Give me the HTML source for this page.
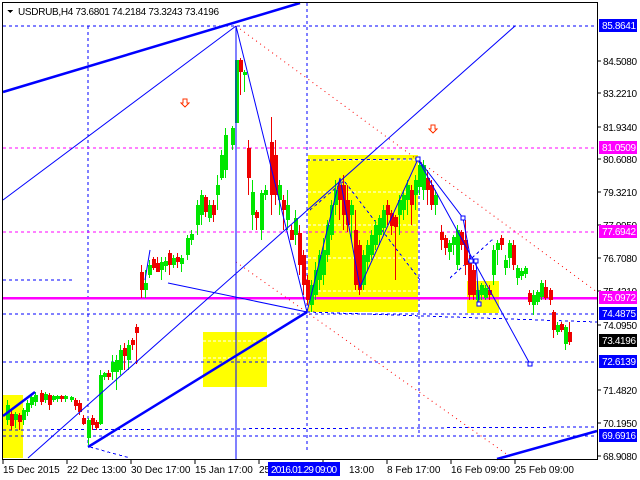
<!DOCTYPE html>
<html><head><meta charset="utf-8"><style>
html,body{margin:0;padding:0;background:#fff;width:640px;height:480px;overflow:hidden}
svg{display:block;font-family:"Liberation Sans",sans-serif;font-size:10px}
</style></head><body>
<svg width="640" height="480" viewBox="0 0 640 480" shape-rendering="crispEdges">
<rect x="0" y="0" width="640" height="480" fill="#fff"/>
<rect x="308" y="155" width="110" height="157" fill="#ffff00"/>
<rect x="203" y="332" width="64" height="55" fill="#ffff00"/>
<rect x="3" y="395" width="20" height="63" fill="#ffff00"/>
<rect x="467" y="281" width="32" height="32" fill="#ffff00"/>
<g stroke="#fff" stroke-dasharray="3,2" stroke-width="1">
<line x1="308" y1="160" x2="418" y2="160"/><line x1="308" y1="192" x2="418" y2="192"/><line x1="308" y1="225" x2="418" y2="225"/><line x1="308" y1="258" x2="418" y2="258"/><line x1="308" y1="291" x2="418" y2="291"/>
<line x1="203" y1="341" x2="267" y2="341"/><line x1="203" y1="358" x2="267" y2="358"/>
</g>
<g stroke="#0000ff" stroke-dasharray="3,3" stroke-width="1" fill="none">
<line x1="3" y1="26" x2="597" y2="26"/>
<line x1="3" y1="314" x2="597" y2="314"/>
<line x1="3" y1="362" x2="597" y2="362"/>
<line x1="3" y1="430" x2="597" y2="427"/>
<line x1="3" y1="436" x2="597" y2="436"/>
<line x1="3" y1="280" x2="72" y2="280"/>
<line x1="88" y1="26" x2="88" y2="446"/>
<line x1="307" y1="3" x2="307" y2="452"/>
<line x1="419" y1="160" x2="419" y2="436"/>
<line x1="307" y1="312" x2="597" y2="322"/>
<line x1="307" y1="160" x2="418" y2="159"/>
<line x1="345" y1="182" x2="420" y2="280"/>
<line x1="310" y1="210" x2="345" y2="180"/>
<line x1="450" y1="278" x2="494" y2="238"/>
<line x1="90" y1="447" x2="130" y2="458"/>
</g>
<g stroke="#ff00ff" stroke-dasharray="3,3" fill="none">
<line x1="3" y1="148" x2="597" y2="148"/>
<line x1="3" y1="232" x2="597" y2="232"/>
</g>
<line x1="3" y1="298" x2="597" y2="298" stroke="#ff00ff" stroke-width="2.5"/>
<g stroke="#ff0000" stroke-dasharray="1,4" fill="none" shape-rendering="auto">
<line x1="236" y1="26" x2="597" y2="292"/>
<line x1="236" y1="262" x2="512" y2="458"/>
</g>
<g id="c" shape-rendering="crispEdges"></g>
<g stroke="#0000ff" stroke-width="1" fill="none" shape-rendering="auto">
<line x1="3" y1="200" x2="236" y2="26"/>
<line x1="28" y1="458" x2="515" y2="26"/>
<polyline points="236,26 307,312 340,178 360,287 418,159 463,218 471,261 476,261 479,304"/>
<line x1="418" y1="159" x2="530" y2="364"/>
<line x1="145" y1="280" x2="150" y2="250"/>
<line x1="168" y1="283" x2="307" y2="312"/>
</g>
<line x1="236" y1="26" x2="236" y2="459" stroke="#0000ff" stroke-width="1"/>
<g stroke="#0000ff" stroke-width="2.5" fill="none" shape-rendering="auto">
<line x1="3" y1="92" x2="300" y2="3"/>
<line x1="88" y1="447" x2="307" y2="312"/>
<line x1="3" y1="416" x2="35" y2="392"/>
<line x1="497" y1="459" x2="597" y2="431"/>
</g>
<g fill="#fff" stroke="#0000ff">
<rect x="416" y="157" width="4" height="4"/><rect x="461" y="216" width="4" height="4"/><rect x="469" y="259" width="4" height="4"/><rect x="474" y="259" width="4" height="4"/><rect x="477" y="302" width="4" height="4"/><rect x="528" y="362" width="4" height="4"/>
</g>
<g fill="#fff" stroke="#ff3300">
<path d="M183 99h4v4h2l-4 4-4-4h2z"/>
<path d="M431 125h4v4h2l-4 4-4-4h2z"/>
</g>
<line x1="2.5" y1="2" x2="2.5" y2="459" stroke="#000"/>
<line x1="2" y1="2.5" x2="597" y2="2.5" stroke="#000"/>
<line x1="597.5" y1="2" x2="597.5" y2="459" stroke="#000"/>
<line x1="2" y1="459.5" x2="598" y2="459.5" stroke="#000"/>
<path d="M7 10h6l-3 3z" fill="#000"/>
<text x="18" y="15" fill="#000" textLength="201">USDRUB,H4  73.6801 74.2184 73.3243 73.4196</text>
<g fill="#000">
<g stroke="#000"><line x1="597" y1="61" x2="601" y2="61"/><line x1="597" y1="93" x2="601" y2="93"/><line x1="597" y1="127" x2="601" y2="127"/><line x1="597" y1="159" x2="601" y2="159"/><line x1="597" y1="192" x2="601" y2="192"/><line x1="597" y1="225" x2="601" y2="225"/><line x1="597" y1="258" x2="601" y2="258"/><line x1="597" y1="291" x2="601" y2="291"/><line x1="597" y1="325" x2="601" y2="325"/><line x1="597" y1="390" x2="601" y2="390"/><line x1="597" y1="423" x2="601" y2="423"/><line x1="597" y1="456" x2="601" y2="456"/></g>
<g textLength="34" lengthAdjust="spacingAndGlyphs">
<text x="603" y="65" textLength="34">84.5080</text><text x="603" y="97" textLength="34">83.2210</text><text x="603" y="131" textLength="34">81.9340</text><text x="603" y="163" textLength="34">80.6080</text><text x="603" y="196" textLength="34">79.3210</text><text x="603" y="229" textLength="34">77.9950</text><text x="603" y="262" textLength="34">76.7080</text><text x="603" y="295" textLength="34">75.4210</text><text x="603" y="329" textLength="34">74.0950</text><text x="603" y="366" textLength="34">72.9080</text><text x="603" y="394" textLength="34">71.4820</text><text x="603" y="427" textLength="34">70.1950</text><text x="603" y="460" textLength="34">68.9080</text>
</g>
</g>
<g>
<rect x="599" y="19" width="38" height="13" fill="#0000ff"/><text x="602" y="29" fill="#fff" textLength="34">85.8641</text>
<rect x="599" y="141" width="38" height="13" fill="#ff00ff"/><text x="602" y="151" fill="#fff" textLength="34">81.0509</text>
<rect x="599" y="225" width="38" height="13" fill="#ff00ff"/><text x="602" y="235" fill="#fff" textLength="34">77.6942</text>
<rect x="599" y="291" width="38" height="13" fill="#ff00ff"/><text x="602" y="301" fill="#fff" textLength="34">75.0972</text>
<rect x="599" y="307" width="38" height="13" fill="#0000ff"/><text x="602" y="317" fill="#fff" textLength="34">74.4875</text>
<rect x="599" y="334" width="38" height="13" fill="#000"/><text x="602" y="344" fill="#fff" textLength="34">73.4196</text>
<rect x="599" y="355" width="38" height="13" fill="#0000ff"/><text x="602" y="365" fill="#fff" textLength="34">72.6139</text>
<rect x="599" y="429" width="38" height="13" fill="#0000ff"/><text x="602" y="439" fill="#fff" textLength="34">69.6916</text>
</g>
<g stroke="#000"><line x1="3" y1="459" x2="3" y2="464"/><line x1="67" y1="459" x2="67" y2="464"/><line x1="131" y1="459" x2="131" y2="464"/><line x1="195" y1="459" x2="195" y2="464"/><line x1="259" y1="459" x2="259" y2="464"/><line x1="323" y1="459" x2="323" y2="464"/><line x1="387" y1="459" x2="387" y2="464"/><line x1="451" y1="459" x2="451" y2="464"/><line x1="515" y1="459" x2="515" y2="464"/></g>
<g fill="#000">
<text x="3" y="473">15 Dec 2015</text><text x="67" y="473">22 Dec 13:00</text><text x="131" y="473">30 Dec 17:00</text><text x="195" y="473">15 Jan 17:00</text><text x="259" y="473">25</text><text x="349" y="473">13:00</text><text x="387" y="473">8 Feb 17:00</text><text x="451" y="473">16 Feb 09:00</text><text x="515" y="473">25 Feb 09:00</text>
</g>
<rect x="268" y="462" width="72" height="14" fill="#0000ff"/><text x="271" y="473" fill="#fff" textLength="66">2016.01.29 09:00</text>
</svg>
<script>
var d=[
[6,'g',400,425,405,420],[10,'r',410,430,414,426],[14,'g',412,428,414,420],[18,'r',413,430,415,422],[22,'g',408,425,410,420],[26,'g',400,416,403,412],[30,'g',395,408,397,405],[34,'g',392,406,395,402],[40,'r',390,405,393,402],[44,'g',392,403,394,400],[48,'r',393,410,395,405],[52,'g',395,402,396,400],[56,'g',395,402,396,399],[60,'r',395,402,396,399],[64,'g',395,402,396,399],[70,'g',396,402,397,400],[74,'r',398,410,400,406],[78,'r',400,415,403,412],[82,'r',415,425,418,424],[87,'g',418,445,420,438],[91,'r',415,430,418,425],[95,'r',420,430,422,428],[99,'g',370,425,375,424],[103,'g',372,380,373,377],[107,'r',370,380,373,377],[111,'g',355,380,362,372],[115,'g',355,390,360,372],[119,'g',345,375,350,370],[123,'r',343,370,348,356],[127,'g',340,370,345,360],[131,'r',338,350,340,345],[135,'r',324,364,327,333],
[140,'r',265,298,272,290],[144,'g',270,298,283,290],[148,'g',260,278,265,275],[152,'r',257,270,259,268],[156,'r',257,272,263,272],[160,'g',257,280,262,270],[164,'g',257,272,261,266],[168,'r',250,275,253,265],[172,'g',255,268,258,265],[176,'r',253,268,257,262],[180,'g',255,272,258,264],[186,'g',235,260,238,255],[190,'g',230,245,234,240],[196,'g',200,235,205,225],[200,'g',190,225,195,215],[204,'r',195,217,197,212],[208,'g',200,222,205,218],[212,'r',200,222,205,215],[216,'g',175,210,185,195],[220,'g',150,180,155,178],[224,'g',128,178,135,170],[231,'g',126,150,128,145],[235,'g',60,123,60,123],[239,'r',58,95,60,72],[243,'g',70,92,72,75],
[247,'r',140,195,148,178],[251,'g',180,230,192,215],[255,'r',210,230,212,218],[260,'g',190,240,193,230],[264,'g',185,200,190,195],[270,'r',117,215,142,195],[274,'r',140,205,155,195],[278,'g',180,215,185,200],[282,'r',195,230,200,210],[286,'g',190,230,205,220],[290,'r',225,240,230,240],[294,'g',210,245,218,235],[298,'r',225,275,233,265],[302,'r',250,295,255,285],[306,'r',275,305,280,300],[310,'g',280,312,285,305],[314,'g',262,300,270,295],[318,'g',250,290,255,280],[322,'g',238,285,250,275],[326,'g',220,262,225,255],[330,'g',200,240,205,235],[334,'g',180,215,190,205],[338,'r',180,220,185,200],[342,'r',175,230,185,215],[346,'r',185,232,200,225],[350,'g',200,240,205,215],[354,'r',210,290,230,285],[358,'r',240,295,245,290],[362,'g',250,290,255,285],[366,'g',240,270,245,262],[370,'g',230,260,235,255],[374,'g',220,250,225,245],[378,'g',215,245,218,235],[382,'g',205,235,210,228],[386,'r',200,225,205,215],[390,'r',210,235,213,226],[394,'r',215,280,217,227],[398,'g',195,235,200,215],[402,'g',190,220,195,210],[406,'g',180,215,185,200],[410,'r',185,225,190,205],[414,'g',175,210,180,195],[418,'g',160,195,165,187],[422,'g',160,200,165,190],[426,'r',170,205,178,190],[430,'r',180,210,185,205],[434,'g',190,215,195,205],
[440,'r',225,250,232,240],[444,'r',235,255,238,248],[448,'g',240,260,243,252],[452,'g',235,255,237,245],[456,'g',225,270,230,265],[460,'r',230,250,232,245],[464,'r',220,275,240,265],[468,'r',255,300,262,295],[472,'r',265,300,270,295],[476,'g',283,305,290,300],[480,'g',283,300,285,295],[484,'g',285,300,288,298],[488,'r',285,300,290,295],[492,'g',245,285,250,275],[496,'g',240,265,243,250],[500,'r',235,250,238,245],[504,'g',255,275,260,268],[508,'g',240,268,243,258],[512,'r',240,270,245,265],[516,'g',265,285,268,278],[520,'g',268,280,271,276],[524,'g',266,278,268,274],[528,'r',290,305,293,302],[532,'g',290,315,295,305],[536,'g',290,305,292,302],[540,'g',280,300,283,297],[544,'r',280,300,287,298],[549,'r',288,305,290,300],[552,'r',310,338,312,330],[556,'g',322,335,325,332],[560,'r',322,332,324,330],[564,'g',325,350,327,344],[568,'r',322,345,332,342]];
var s='';d.forEach(function(c){var col=c[1]=='g'?'#00e600':'#ee0000';s+='<line x1="'+(c[0]+1.5)+'" y1="'+c[2]+'" x2="'+(c[0]+1.5)+'" y2="'+c[3]+'" stroke="'+col+'"/><rect x="'+c[0]+'" y="'+c[4]+'" width="4" height="'+Math.max(1,c[5]-c[4])+'" fill="'+col+'"/>';});
document.getElementById('c').innerHTML=s;
</script>
</body></html>
